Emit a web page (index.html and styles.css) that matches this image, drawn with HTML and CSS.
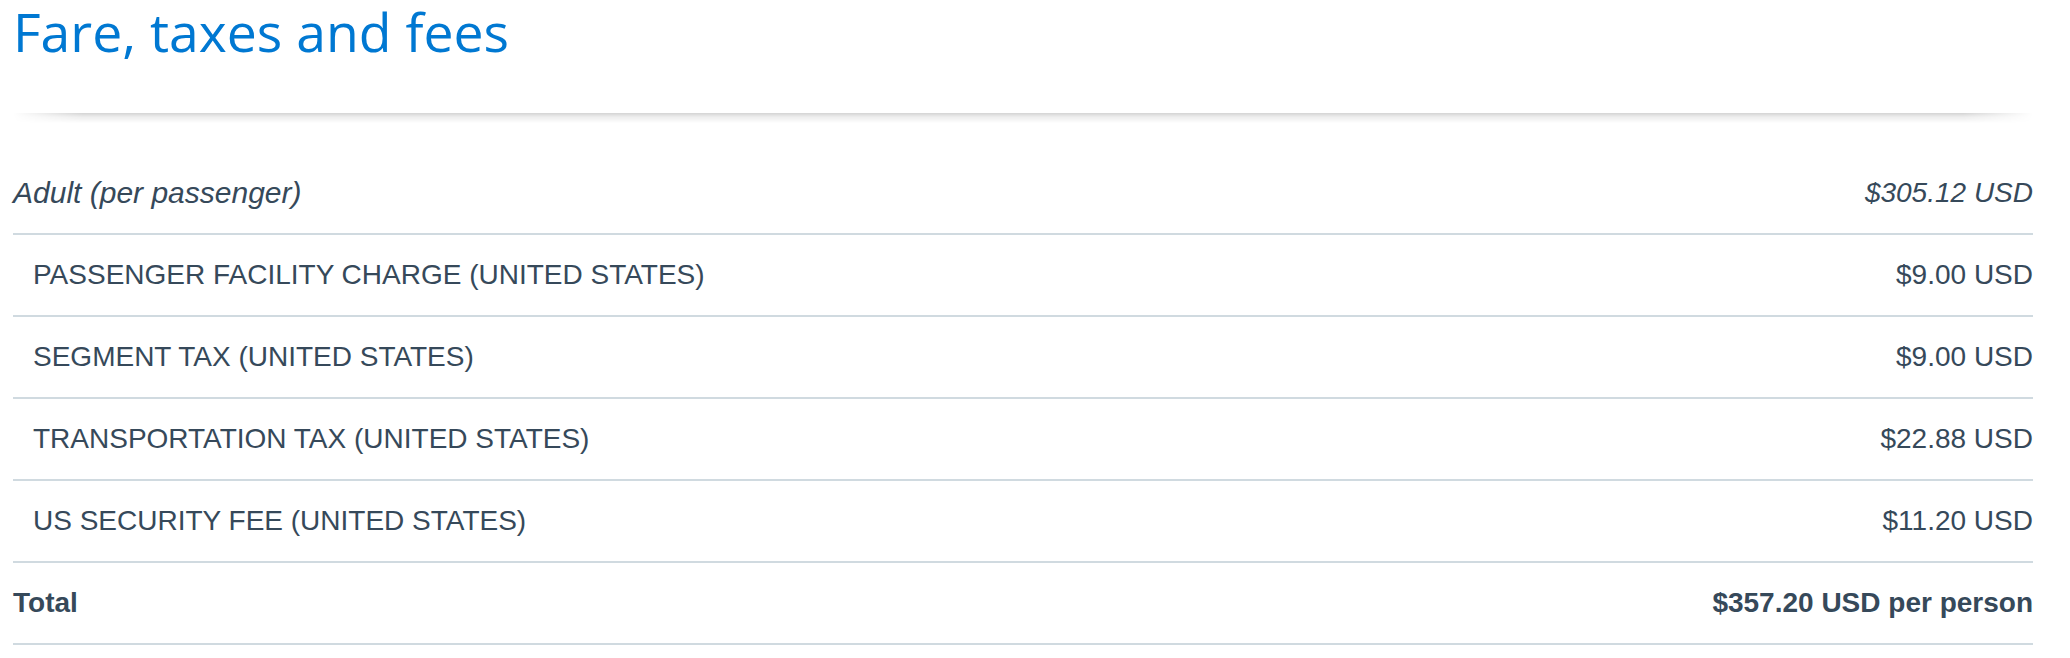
FILE: index.html
```html
<!DOCTYPE html>
<html lang="en">
<head>
<meta charset="utf-8">
<title>Fare, taxes and fees</title>
<link rel="stylesheet" href="styles.css">
</head>
<body>
<div class="page">
  <h1 class="title">Fare, taxes and fees</h1>
  <div class="divider"></div>
  <div class="fare-table">
    <div class="row row-adult">
      <span class="label">Adult (per passenger)</span>
      <span class="amount">$305.12 USD</span>
    </div>
    <div class="row row-tax">
      <span class="label">PASSENGER FACILITY CHARGE (UNITED STATES)</span>
      <span class="amount">$9.00 USD</span>
    </div>
    <div class="row row-tax">
      <span class="label">SEGMENT TAX (UNITED STATES)</span>
      <span class="amount">$9.00 USD</span>
    </div>
    <div class="row row-tax">
      <span class="label">TRANSPORTATION TAX (UNITED STATES)</span>
      <span class="amount">$22.88 USD</span>
    </div>
    <div class="row row-tax">
      <span class="label">US SECURITY FEE (UNITED STATES)</span>
      <span class="amount">$11.20 USD</span>
    </div>
    <div class="row row-total">
      <span class="label">Total</span>
      <span class="amount">$357.20 USD per person</span>
    </div>
  </div>
</div>
</body>
</html>
```

FILE: styles.css
```css
html, body {
  margin: 0;
  padding: 0;
  background: #ffffff;
}

.page {
  width: 2020px;
  margin-left: 13px;
  font-family: "Liberation Sans", Arial, sans-serif;
  color: #36495a;
}

.title {
  margin: 2px 0 0;
  font-family: "Open Sans", "Liberation Sans", sans-serif;
  font-weight: 400;
  font-size: 53.5px;
  line-height: 60px;
  color: #0078d2;
}

.divider {
  margin-top: 51px;
  height: 10px;
  background: linear-gradient(to bottom, rgba(0, 0, 0, 0.17), rgba(0, 0, 0, 0.07) 40%, rgba(0, 0, 0, 0));
  -webkit-mask-image: linear-gradient(90deg, transparent 0, #000 70px, #000 calc(100% - 70px), transparent 100%);
  mask-image: linear-gradient(90deg, transparent 0, #000 70px, #000 calc(100% - 70px), transparent 100%);
}

.fare-table {
  margin-top: 30px;
  display: flex;
  flex-direction: column;
}

.row {
  display: flex;
  justify-content: space-between;
  align-items: center;
  height: 80px;
  border-bottom: 2px solid #d0dae0;
  font-size: 28px;
}

.row-adult {
  font-style: italic;
}

.row-adult .label {
  font-size: 30px;
}

.row-tax {
  padding-left: 20px;
}

.row-total {
  font-weight: 700;
}
```
